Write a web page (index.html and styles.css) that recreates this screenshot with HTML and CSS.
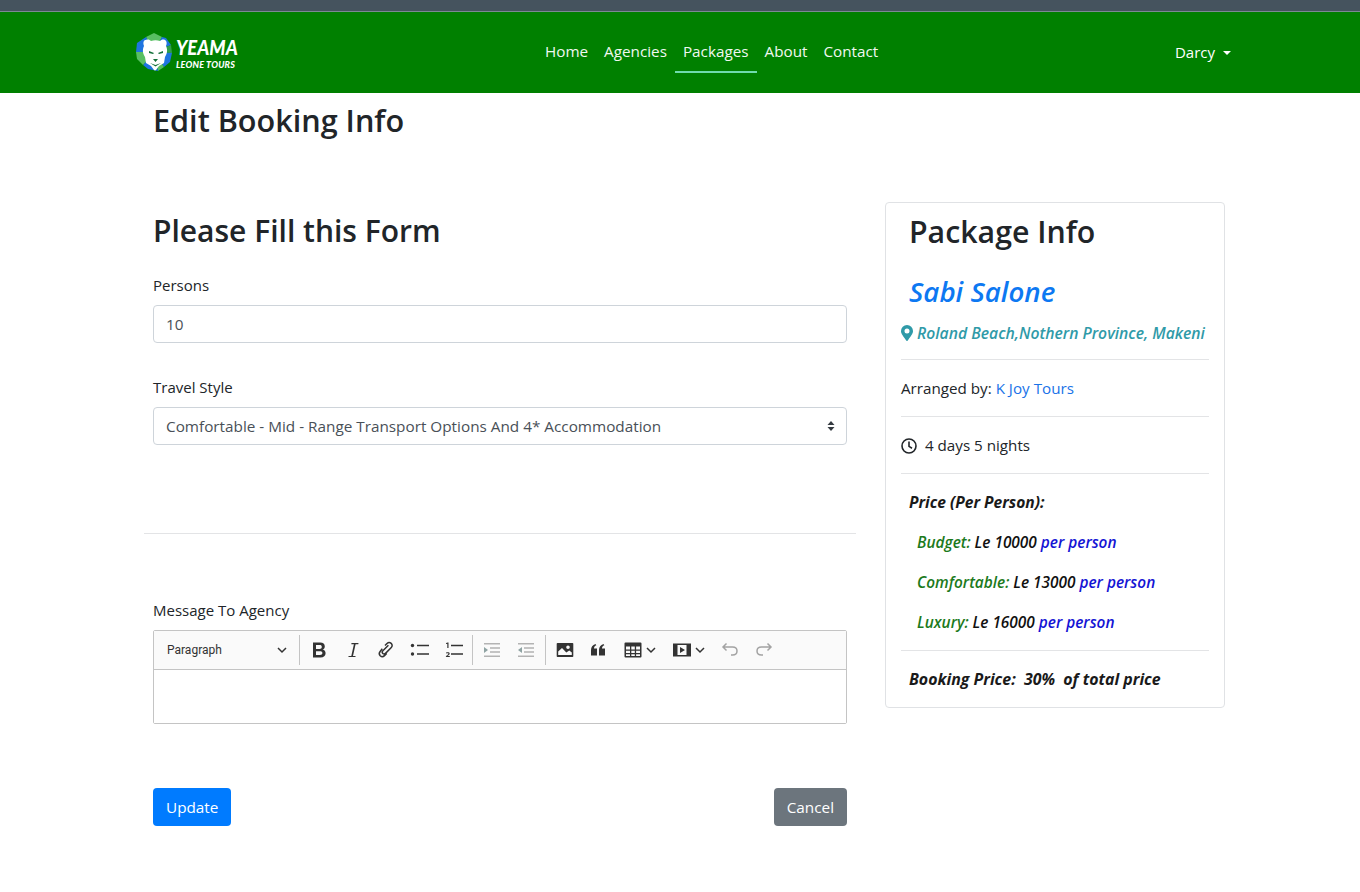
FILE: index.html
```html
<!DOCTYPE html>
<html lang="en">
<head>
  <meta charset="UTF-8" />
  <meta name="viewport" content="width=device-width, initial-scale=1.0"/>
  <title>Edit Booking Info - Yeama Leone Tours</title>
  <link rel="stylesheet" href="styles.css">
</head>
<body>
  <div class="top-strip"></div>

  <nav class="navbar">
    <a class="brand" href="#">
      <svg class="brand-lion" viewBox="0 0 36 40" width="36" height="40" aria-hidden="true">
        <polygon fill="#58bf62" points="18,20 10,5 18,1 26,5"/>
        <polygon fill="#1f74e0" points="18,20 26,5 30,6 35,13"/>
        <polygon fill="#2f9e4c" points="18,20 35,13 36,21"/>
        <polygon fill="#1f74e0" points="18,20 36,21 34,30 28,35"/>
        <polygon fill="#58bf62" points="18,20 28,35 22,39"/>
        <polygon fill="#1f74e0" points="18,20 22,39 12,37 7,33"/>
        <polygon fill="#58bf62" points="18,20 7,33 1,27 0,20"/>
        <polygon fill="#1f74e0" points="18,20 0,20 1,11 10,5"/>
        <path fill="#fff" d="M10 8c2-1 4 0 5 1 3-1 6-1 9 0 1-1 3-2 5-1 2 1 2 4 1 6 2 4 1 8-1 11l-1 6-5 3-3 4c-.5.5-1.500.5-2 0l-3-4-5-3-1-6c-2-3-3-7-1-11-1-2-1-5 1-6z"/>
        <path fill="#14703a" d="M13 19l5 2-1 1-4-1zM27 19l-5 2 1 1 4-1zM17 27h5l-2.500 3zM14 31l5.500 2 5.500-2-5.500 3.500z"/>
      </svg>
      <span class="brand-text">
        <span class="brand-top">YEAMA</span>
        <span class="brand-sub">LEONE TOURS</span>
      </span>
    </a>
    <ul class="nav-links">
      <li><a href="#">Home</a></li>
      <li><a href="#">Agencies</a></li>
      <li><a class="active" href="#">Packages</a></li>
      <li><a href="#">About</a></li>
      <li><a href="#">Contact</a></li>
    </ul>
    <a class="nav-user" href="#">Darcy<span class="caret"></span></a>
  </nav>

  <main class="container">
    <h2 class="page-title">Edit Booking Info</h2>

    <div class="row">
      <form class="booking-form">
        <div class="form-inner">
          <h2 class="form-title">Please Fill this Form</h2>

          <label for="persons">Persons</label>
          <input class="control" type="text" id="persons" value="10">

          <label class="second" for="style">Travel Style</label>
          <div class="select-wrap">
            <select class="control" id="style">
              <option>Comfortable - Mid - Range Transport Options And 4* Accommodation</option>
            </select>
            <svg class="select-arrows" viewBox="0 0 8 12" width="8" height="12" aria-hidden="true">
              <path fill="#343a40" d="M4 1l3.500 4h-7zM4 11L.5 7h7z"/>
            </svg>
          </div>
        </div>

        <hr class="form-rule">

        <div class="form-inner">
          <label>Message To Agency</label>
          <div class="editor">
            <div class="toolbar">
              <div class="tb-dropdown">Paragraph
                <svg viewBox="0 0 10 10" width="10" height="10"><path class="chev" d="M1 3l4 4 4-4"/></svg>
              </div>
              <span class="tb-sep"></span>
              <button type="button" class="tb-btn"><svg viewBox="0 0 20 20"><path fill="#333" fill-rule="evenodd" d="M4 2.500h7.200c3 0 4.600 1.500 4.600 3.900 0 1.500-.8 2.700-2.200 3.200 1.900.4 3 1.800 3 3.700 0 2.700-1.900 4.200-5 4.200H4zm3 2.500v3.900h3.600c1.400 0 2.200-.7 2.200-2s-.8-1.900-2.200-1.900zm0 6.300V15h4c1.500 0 2.400-.7 2.400-1.900s-.9-1.800-2.400-1.800z"/></svg></button>
              <button type="button" class="tb-btn"><svg viewBox="0 0 20 20"><path fill="#333" d="M8.500 3h7l-.2 1.300h-2.700L10 16h2.600l-.2 1h-7l.2-1h2.700l2.600-11.700H8.300z"/></svg></button>
              <button type="button" class="tb-btn"><svg viewBox="0 0 20 20"><path class="line" d="M9 5.500l2-2c1.300-1.300 3-1.200 4.200-.2s1.300 3 .1 4.200L9.500 13.400c-.8.8-2 .8-2.700.1s-.7-1.900.1-2.700l5.500-5.600M6.300 8.800l-2 2.400c-1.300 1.500-1.300 3.200-.1 4.500 1.300 1.200 3.100 1.100 4.300-.1l2.200-2.200"/></svg></button>
              <button type="button" class="tb-btn"><svg viewBox="0 0 20 20"><circle cx="2.500" cy="5.500" r="1.700" fill="#333"/><circle cx="2.500" cy="14" r="1.700" fill="#333"/><path fill="#333" d="M7 4.700h12v1.600H7zM7 13.200h12v1.600H7z"/></svg></button>
              <button type="button" class="tb-btn"><svg viewBox="0 0 20 20"><path fill="#333" d="M7 4.700h12v1.600H7zM7 13.200h12v1.600H7zM2 3l1.800-.6h.7V8H3.300V3.800L2 4.100zM1.800 16.800c.4-1.600 2.800-2.100 2.800-3 0-.8-1.400-.7-2.500-.2v-1c1.500-.6 3.600-.5 3.600 1.100 0 1.300-1.900 1.700-2.500 2.400h2.600v.9H1.800z"/></svg></button>
              <span class="tb-sep"></span>
              <button type="button" class="tb-btn"><svg viewBox="0 0 20 20"><path fill="#b3b3b3" d="M2 3h16v1.500H2zM8 7.300h10v1.500H8zM8 11.300h10v1.500H8zM2 15.500h16V17H2z"/><path fill="#8fa3a3" d="M2 7l4 3-4 3z"/></svg></button>
              <button type="button" class="tb-btn"><svg viewBox="0 0 20 20"><path fill="#b3b3b3" d="M2 3h16v1.500H2zM8 7.300h10v1.500H8zM8 11.300h10v1.500H8zM2 15.500h16V17H2z"/><path fill="#8fa3a3" d="M6 7l-4 3 4 3z"/></svg></button>
              <span class="tb-sep"></span>
              <button type="button" class="tb-btn"><svg viewBox="0 0 20 20"><path fill="#333" fill-rule="evenodd" d="M2.500 3h15a.8.8 0 0 1 .8.8v12.400a.8.8 0 0 1-.8.8h-15a.8.8 0 0 1-.8-.8V3.800a.8.8 0 0 1 .8-.8zm10.500 2.500a1.800 1.800 0 1 0 0 3.600 1.800 1.800 0 0 0 0-3.600zM3.200 15h13.600v-2.500l-2.500-2-3 2-4.300-4.500-3.800 3.500z"/></svg></button>
              <button type="button" class="tb-btn"><svg viewBox="0 0 20 20"><path fill="#333" d="M3 15.500V10c0-3 1.500-5 4.500-6l.8 1.300C6.800 6 6 7 6 8.500h3v7zM11 15.500V10c0-3 1.500-5 4.500-6l.8 1.300C14.800 6 14 7 14 8.500h3v7z"/></svg></button>
              <button type="button" class="tb-btn tb-wide"><svg viewBox="0 0 20 20"><path fill="#333" fill-rule="evenodd" d="M2.500 2.500h15a1 1 0 0 1 1 1v13a1 1 0 0 1-1 1h-15a1 1 0 0 1-1-1v-13a1 1 0 0 1 1-1zM3 6.500v3h4v-3zm5.300 0v3h3.500v-3zm4.800 0v3H17v-3zM3 10.800V13h4v-2.200zm5.300 0V13h3.500v-2.200zm4.800 0V13H17v-2.200zM3 14.300V16h4v-1.700zm5.300 0V16h3.500v-1.700zm4.800 0V16H17v-1.700z"/></svg><svg class="tb-chev" viewBox="0 0 10 10"><path class="chev" d="M1 3l4 4 4-4"/></svg></button>
              <button type="button" class="tb-btn tb-wide"><svg viewBox="0 0 20 20"><path fill="#333" fill-rule="evenodd" d="M1 3.500h18v13H1zM5.500 5v10h9V5zM8 7l5 3-5 3z"/></svg><svg class="tb-chev" viewBox="0 0 10 10"><path class="chev" d="M1 3l4 4 4-4"/></svg></button>
              <button type="button" class="tb-btn"><svg viewBox="0 0 20 20"><path class="line muted" d="M6.500 3.500L3 7l3.500 3.500M3 7h9.500c3 0 4.500 1.800 4.500 4s-1.500 4-4.500 4H11"/></svg></button>
              <button type="button" class="tb-btn"><svg viewBox="0 0 20 20"><path class="line muted" d="M13.500 3.500L17 7l-3.500 3.500M17 7H7.500C4.500 7 3 8.800 3 11s1.500 4 4.500 4H9"/></svg></button>
            </div>
            <div class="editor-body"></div>
          </div>

          <div class="form-actions">
            <button type="submit" class="btn btn-primary">Update</button>
            <a class="btn btn-secondary" href="#">Cancel</a>
          </div>
        </div>
      </form>

      <aside class="card">
        <h2 class="card-title">Package Info</h2>
        <h3 class="package-name">Sabi Salone</h3>
        <p class="location">
          <svg viewBox="0 0 12 16" width="12" height="16" aria-hidden="true"><path fill="#2f9aa8" fill-rule="evenodd" d="M6 0a6 6 0 0 1 6 6c0 2.400-.8 3.100-5.200 9.500a1 1 0 0 1-1.600 0C.8 9.100 0 8.400 0 6a6 6 0 0 1 6-6zm0 3.500a2.500 2.500 0 1 0 0 5 2.500 2.500 0 0 0 0-5z"/></svg>
          Roland Beach,Nothern Province, Makeni
        </p>
        <hr>
        <p class="card-line">Arranged by: <a href="#">K Joy Tours</a></p>
        <hr>
        <p class="card-line">
          <svg class="clock" viewBox="0 0 16 16" width="16" height="16" aria-hidden="true"><circle cx="8" cy="8" r="7" fill="none" stroke="#212529" stroke-width="1.600"/><path d="M8 3.600V8.400l3 1.800" fill="none" stroke="#212529" stroke-width="1.600"/></svg>
          4 days 5 nights
        </p>
        <hr>
        <h4 class="price-head">Price (Per Person):</h4>
        <p class="price"><span class="tier">Budget:</span> Le 10000 <span class="per">per person</span></p>
        <p class="price"><span class="tier">Comfortable:</span> Le 13000 <span class="per">per person</span></p>
        <p class="price"><span class="tier">Luxury:</span> Le 16000 <span class="per">per person</span></p>
        <hr>
        <h4 class="booking-price">Booking Price:&nbsp; 30%&nbsp; of total price</h4>
      </aside>
    </div>
  </main>
</body>
</html>
```

FILE: styles.css
```css
:root {
  --verde: #008000;
  --texto: #212529;
  --linha: #e3e4e6;
  --borda: #ced4da;
  --teal: #2f9aa8;
}

* {
  box-sizing: border-box;
}

body {
  margin: 0;
  font-family: "Open Sans", "Noto Sans", sans-serif;
  font-size: 15px;
  line-height: 24px;
  color: var(--texto);
  background-color: #fff;
}

a {
  text-decoration: none;
}

.top-strip {
  height: 12px;
  background-color: #45535e;
  border-bottom: 1px solid #7b8a93;
}

.navbar {
  height: 81px;
  background-color: var(--verde);
  position: relative;
  display: flex;
  align-items: center;
  justify-content: space-between;
  padding: 0 129px 0 136px;
}

.brand {
  display: flex;
  align-items: center;
  gap: 4px;
  color: #fff;
  margin-top: -1px;
}

.brand-text {
  display: flex;
  flex-direction: column;
  width: 62px;
  font-family: "Lato", sans-serif;
  font-style: italic;
  font-weight: 900;
  white-space: nowrap;
}

.brand-top {
  font-size: 20px;
  line-height: 24px;
  transform: scaleX(.92);
  transform-origin: left;
}

.brand-sub {
  font-size: 9px;
  line-height: 11px;
  letter-spacing: .2px;
}

.nav-links {
  list-style: none;
  display: flex;
  margin: 0;
  padding: 0;
  position: absolute;
  left: 537px;
  top: 20px;
}

.nav-links a {
  display: block;
  height: 41px;
  padding: 7px 8px;
  font-size: 15.250px;
  color: #f1f8f1;
}

.nav-links a.active {
  border-bottom: 2px solid #6fdcae;
}

.nav-user {
  color: #fff;
  font-size: 15px;
  margin-top: -1px;
}

.caret {
  display: inline-block;
  margin-left: 8px;
  vertical-align: 3px;
  border-top: 4.500px solid #fff;
  border-left: 4.500px solid transparent;
  border-right: 4.500px solid transparent;
}

.container {
  width: 1140px;
  margin: 0 auto;
  padding: 0 25px 0 34px;
}

.page-title,
.form-title,
.card-title {
  margin: 0;
  font-size: 30.300px;
  font-weight: 600;
  line-height: 38px;
}

.page-title {
  padding: 8px 9px 0;
  font-size: 30.600px;
}

.row {
  display: flex;
  justify-content: space-between;
  margin-top: 64px;
}

.booking-form {
  width: 712px;
  margin-top: 9px;
}

.form-inner {
  padding: 0 9px;
}

.form-title {
  margin-bottom: 23px;
  font-size: 30px;
}

label {
  display: block;
  margin-bottom: 8px;
}

label.second {
  margin-top: 32px;
}

.control {
  display: block;
  width: 100%;
  height: 38px;
  padding: 6px 12px;
  font: inherit;
  font-size: 15.300px;
  color: #495057;
  background-color: #fff;
  border: 1px solid var(--borda);
  border-radius: 4px;
  appearance: none;
}

.select-wrap {
  position: relative;
}

.select-arrows {
  position: absolute;
  right: 12px;
  top: 13px;
}

.form-rule {
  margin: 88px 0 64px;
  border: 0;
  border-top: 1px solid var(--linha);
}

.editor {
  border: 1px solid #c4c4c4;
  border-radius: 2px;
}

.toolbar {
  height: 39px;
  display: flex;
  align-items: center;
  background-color: #fafafa;
  border-bottom: 1px solid #c4c4c4;
}

.tb-dropdown {
  width: 145px;
  padding: 0 12px 0 13px;
  display: flex;
  align-items: center;
  justify-content: space-between;
  font-family: "Roboto", sans-serif;
  font-size: 12px;
  color: #333;
}

.chev {
  fill: none;
  stroke: #333;
  stroke-width: 1.500;
}

.tb-sep {
  width: 1px;
  height: 30px;
  margin-right: 2px;
  background-color: #c4c4c4;
}

.tb-sep:not(:nth-child(2)) {
  margin-left: 2px;
}

.tb-btn {
  width: 33.700px;
  height: 30px;
  padding: 0;
  display: flex;
  align-items: center;
  justify-content: center;
  background: none;
  border: 0;
}

.tb-btn svg {
  width: 20px;
  height: 20px;
}

.tb-btn svg.tb-chev {
  width: 10px;
  height: 10px;
  margin-left: 3px;
}

.tb-wide {
  width: 49px;
}

.line {
  fill: none;
  stroke: #333;
  stroke-width: 1.500;
}

.line.muted {
  stroke: #a3a3a3;
}

.editor-body {
  height: 53px;
  background-color: #fff;
}

.form-actions {
  display: flex;
  justify-content: space-between;
  margin-top: 64px;
}

.btn {
  display: block;
  height: 38px;
  padding: 7px 13px;
  font: inherit;
  font-size: 15.300px;
  color: #fff;
  border: 0;
  border-radius: 4px;
}

.btn-primary {
  background-color: #007bff;
}

.btn-secondary {
  background-color: #6c757d;
}

.card {
  width: 340px;
  height: 506px;
  margin-top: -1px;
  padding: 10px 15px 0;
  border: 1px solid #e0e2e5;
  border-radius: 4px;
}

.card-title {
  padding-left: 8px;
}

.package-name {
  margin: 23px 0 0;
  padding-left: 8px;
  font-size: 27.700px;
  font-weight: 600;
  font-style: italic;
  line-height: 34px;
  color: #0d78f2;
}

.location {
  margin: 13px 0 0;
  display: flex;
  align-items: center;
  gap: 4px;
  font-size: 15.700px;
  font-weight: 600;
  font-style: italic;
  white-space: nowrap;
  color: var(--teal);
}

.card hr {
  margin: 14px 0 0;
  border: 0;
  border-top: 1px solid var(--linha);
}

.card .price + hr {
  margin-top: 15px;
}

.card-line {
  margin: 16px 0;
  font-size: 15.200px;
}

.card-line a {
  color: #1a73e8;
}

.clock {
  margin-right: 4px;
  vertical-align: -3px;
}

.card .card-line + hr {
  margin-top: 16px;
}

.price-head,
.booking-price {
  margin: 16px 0 0;
  padding-left: 8px;
  font-size: 15.600px;
  font-weight: 700;
  font-style: italic;
  color: #1a1a1a;
}

.booking-price {
  font-size: 15.900px;
}

.price {
  margin: 16px 0 0;
  padding-left: 16px;
  font-size: 15.400px;
  font-weight: 600;
  font-style: italic;
  color: #111;
}

.price-head + .price {
  margin-top: 17px;
}

.tier {
  color: #1c7a1c;
}

.per {
  color: #1414d4;
}
```
